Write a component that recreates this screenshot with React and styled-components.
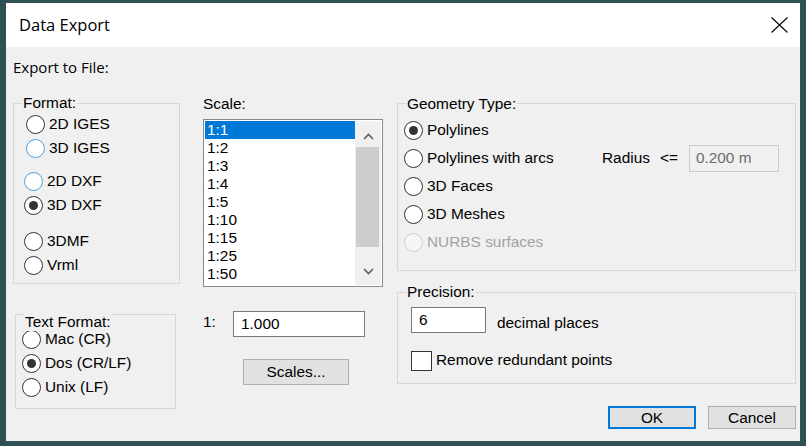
import React from 'react';
import styled, { createGlobalStyle } from 'styled-components';

const GlobalStyle = createGlobalStyle`
  html, body { margin: 0; padding: 0; background: #2f5153; }
  body { width: 806px; height: 446px; overflow: hidden; font-family: "Liberation Sans", Arial, sans-serif; }
  * { box-sizing: border-box; }
`;

const Desktop = styled.div`
  width: 806px;
  height: 446px;
  padding: 3px 0 0 6px;
  background: #2f5153;
`;

const Window = styled.div`
  width: 794px;
  height: 438px;
  background: #f0f0f0;
  display: flex;
  flex-direction: column;
`;

const TitleBar = styled.div`
  height: 44px;
  flex-shrink: 0;
  background: #ffffff;
  display: flex;
  align-items: center;
  justify-content: space-between;
  padding: 0 12px 0 13px;
`;

const Title = styled.div`
  font-family: "Open Sans", sans-serif;
  font-size: 16.5px;
  line-height: 20px;
  color: #000;
`;

const CloseButton = styled.div`
  width: 17px;
  height: 16px;
  display: flex;
`;

const Body = styled.div`
  flex: 1;
  padding: 10px 4px 0 7px;
`;

const TopLabel = styled.div`
  font-family: "Open Sans", sans-serif;
  font-size: 15px;
  line-height: 20px;
  color: #000;
`;

const Main = styled.div`
  margin-top: 18px;
  display: grid;
  grid-template-columns: 190px 194px 399px;
  align-items: start;
`;

const Column = styled.div`
  display: flex;
  flex-direction: column;
  align-items: flex-start;
`;

const GroupBox = styled.div`
  position: relative;
  border: 1px solid #d7d7d7;
  width: ${p => p.$w}px;
  height: ${p => p.$h}px;
  margin: ${p => p.$m || '0'};
  padding: ${p => p.$pad || '0'};
  display: flex;
  flex-direction: column;
`;

const Legend = styled.span`
  position: absolute;
  left: 8px;
  top: ${p => (p.$top !== undefined ? p.$top : -9)}px;
  background: #f0f0f0;
  padding: 0 1px;
  font-size: 15.4px;
  line-height: 18px;
  color: #000;
  white-space: nowrap;
`;

const Text = styled.span`
  font-size: 15.4px;
  line-height: 18px;
  color: ${p => p.$color || '#000'};
  white-space: nowrap;
  margin: ${p => p.$m || '0'};
`;

const RadioRow = styled.div`
  display: flex;
  align-items: center;
  gap: 4px;
  height: ${p => p.$h || 24}px;
  margin-top: ${p => p.$mt || 0}px;
  padding-left: ${p => p.$indent || 0}px;
  flex: ${p => (p.$basis ? `0 0 ${p.$basis}px` : 'none')};
  font-size: 15.4px;
  color: ${p => (p.$disabled ? '#a3a3a3' : '#000')};
  white-space: nowrap;
`;

const RadioCircle = styled.span`
  width: 19px;
  height: 19px;
  flex-shrink: 0;
  border-radius: 50%;
  border: 1px solid ${p => (p.$disabled ? '#cfcfcf' : p.$accent ? '#4ea1da' : '#333333')};
  background: ${p => (p.$disabled ? '#f5f5f5' : '#ffffff')};
  display: flex;
  align-items: center;
  justify-content: center;
  &::after {
    content: '';
    display: ${p => (p.$checked ? 'block' : 'none')};
    width: 9px;
    height: 9px;
    border-radius: 50%;
    background: #333333;
  }
`;

const Radio = ({ label, checked, accent, disabled, h, mt, indent, basis }) => (
  <RadioRow $h={h} $mt={mt} $indent={indent} $disabled={disabled} $basis={basis}>
    <RadioCircle $checked={checked} $accent={accent} $disabled={disabled} />
    <span>{label}</span>
  </RadioRow>
);

const ListBox = styled.div`
  margin-top: 6px;
  width: 180px;
  height: 168px;
  border: 1px solid #8a8a8a;
  background: #ffffff;
  padding: 1px;
  display: flex;
`;

const ListItems = styled.div`
  flex: 1;
  display: flex;
  flex-direction: column;
`;

const ListItem = styled.div`
  height: 18px;
  line-height: 18px;
  padding-left: 2px;
  font-size: 15.4px;
  color: ${p => (p.$selected ? '#ffffff' : '#000000')};
  background: ${p => (p.$selected ? '#0078d7' : 'transparent')};
`;

const ScrollBar = styled.div`
  width: 26px;
  background: #f0f0f0;
  display: flex;
  flex-direction: column;
`;

const ScrollArrow = styled.div`
  height: 26px;
  display: flex;
  align-items: ${p => (p.$down ? 'flex-start' : 'flex-end')};
  justify-content: center;
  padding: ${p => (p.$down ? '9px 0 0' : '0 0 7px')};
`;

const ScrollThumb = styled.div`
  height: 100px;
  margin: 0 2px 0 1px;
  background: #cdcdcd;
`;

const ScrollTrack = styled.div`
  flex: 1;
`;

const FieldRow = styled.div`
  display: flex;
  align-items: flex-start;
  margin-top: ${p => p.$mt || 0}px;
`;

const TextInput = styled.div`
  width: ${p => p.$w}px;
  height: ${p => p.$h || 26}px;
  border: 1px solid ${p => (p.$disabled ? '#cccccc' : '#7a7a7a')};
  background: ${p => (p.$disabled ? '#f0f0f0' : '#ffffff')};
  padding-left: ${p => p.$pl || 7}px;
  display: flex;
  align-items: center;
  font-size: 15.4px;
  color: ${p => (p.$disabled ? '#6d6d6d' : '#000')};
  margin-left: ${p => p.$ml || 0}px;
`;

const Button = styled.div`
  width: ${p => p.$w}px;
  height: ${p => p.$h}px;
  margin: ${p => p.$m || '0'};
  background: #e1e1e1;
  border: 1px solid ${p => (p.$default ? '#0078d7' : '#adadad')};
  box-shadow: ${p => (p.$default ? 'inset 0 0 0 1px #0078d7' : 'none')};
  display: flex;
  align-items: center;
  justify-content: center;
  font-size: 15.4px;
  color: #000;
`;

const ButtonRow = styled.div`
  margin-top: 22px;
  width: 399px;
  display: flex;
  justify-content: flex-end;
  gap: 12px;
`;

const CheckRow = styled.div`
  display: flex;
  align-items: center;
  margin-top: 18px;
`;

const CheckBox = styled.span`
  width: 21px;
  height: 20px;
  border: 1px solid #333333;
  background: #ffffff;
  flex-shrink: 0;
`;

const Chevron = ({ down }) => (
  <svg width="11" height="7" viewBox="0 0 11 7">
    <path
      d={down ? 'M1 1 L5.5 5.5 L10 1' : 'M1 6 L5.5 1.5 L10 6'}
      fill="none"
      stroke="#606060"
      strokeWidth="1.7"
    />
  </svg>
);

const scales = ['1:1', '1:2', '1:3', '1:4', '1:5', '1:10', '1:15', '1:25', '1:50'];

export default function App() {
  return (
    <>
      <GlobalStyle />
      <Desktop>
        <Window>
          <TitleBar>
            <Title>Data Export</Title>
            <CloseButton>
              <svg width="17" height="16" viewBox="0 0 17 16">
                <path d="M0.5 0.5 L16.5 15.5 M16.5 0.5 L0.5 15.5" stroke="#000" strokeWidth="1.1" fill="none" />
              </svg>
            </CloseButton>
          </TitleBar>
          <Body>
            <TopLabel>Export to File:</TopLabel>
            <Main>
              <Column>
                <GroupBox $w={167} $h={181} $m="8px 0 0 0" $pad="8px 0 0 10px">
                  <Legend $top={-10}>Format:</Legend>
                  <Radio label="2D IGES" indent={2} />
                  <Radio label="3D IGES" indent={2} accent />
                  <Radio label="2D DXF" mt={9} accent />
                  <Radio label="3D DXF" checked />
                  <Radio label="3DMF" mt={12} />
                  <Radio label="Vrml" />
                </GroupBox>
                <GroupBox $w={161} $h={95} $m="30px 0 0 2px" $pad="12px 0 0 6px">
                  <Legend $top={-2}>Text Format:</Legend>
                  <Radio label="Mac (CR)" />
                  <Radio label="Dos (CR/LF)" checked />
                  <Radio label="Unix (LF)" />
                </GroupBox>
              </Column>

              <Column>
                <Text>Scale:</Text>
                <ListBox>
                  <ListItems>
                    {scales.map((s, i) => (
                      <ListItem key={s} $selected={i === 0}>{s}</ListItem>
                    ))}
                  </ListItems>
                  <ScrollBar>
                    <ScrollArrow>
                      <Chevron />
                    </ScrollArrow>
                    <ScrollThumb />
                    <ScrollTrack />
                    <ScrollArrow $down>
                      <Chevron down />
                    </ScrollArrow>
                  </ScrollBar>
                </ListBox>
                <FieldRow $mt={24}>
                  <Text $m="2px 0 0 0" style={{ width: 30 }}>1:</Text>
                  <TextInput $w={132}>1.000</TextInput>
                </FieldRow>
                <Button $w={106} $h={26} $m="22px 0 0 40px">Scales...</Button>
              </Column>

              <Column>
                <GroupBox $w={399} $h={168} $m="8px 0 0 0" $pad="12px 0 0 6px">
                  <Legend $top={-9}>Geometry Type:</Legend>
                  <Radio label="Polylines" h={28} checked />
                  <FieldRow style={{ alignItems: 'center', height: 28 }}>
                    <Radio label="Polylines with arcs" h={28} basis={198} />
                    <Text>Radius</Text>
                    <Text $m="0 0 0 10px">&lt;=</Text>
                    <TextInput $w={90} $h={27} $ml={11} $pl={6} $disabled>0.200 m</TextInput>
                  </FieldRow>
                  <Radio label="3D Faces" h={28} />
                  <Radio label="3D Meshes" h={28} />
                  <Radio label="NURBS surfaces" h={28} disabled />
                </GroupBox>
                <GroupBox $w={399} $h={92} $m="21px 0 0 0" $pad="14px 0 0 13px">
                  <Legend $top={-10}>Precision:</Legend>
                  <FieldRow>
                    <TextInput $w={75}>6</TextInput>
                    <Text $m="7px 0 0 11px">decimal places</Text>
                  </FieldRow>
                  <CheckRow>
                    <CheckBox />
                    <Text $m="-2px 0 0 4px">Remove redundant points</Text>
                  </CheckRow>
                </GroupBox>
                <ButtonRow>
                  <Button $w={88} $h={23} $default>OK</Button>
                  <Button $w={88} $h={23}>Cancel</Button>
                </ButtonRow>
              </Column>
            </Main>
          </Body>
        </Window>
      </Desktop>
    </>
  );
}
